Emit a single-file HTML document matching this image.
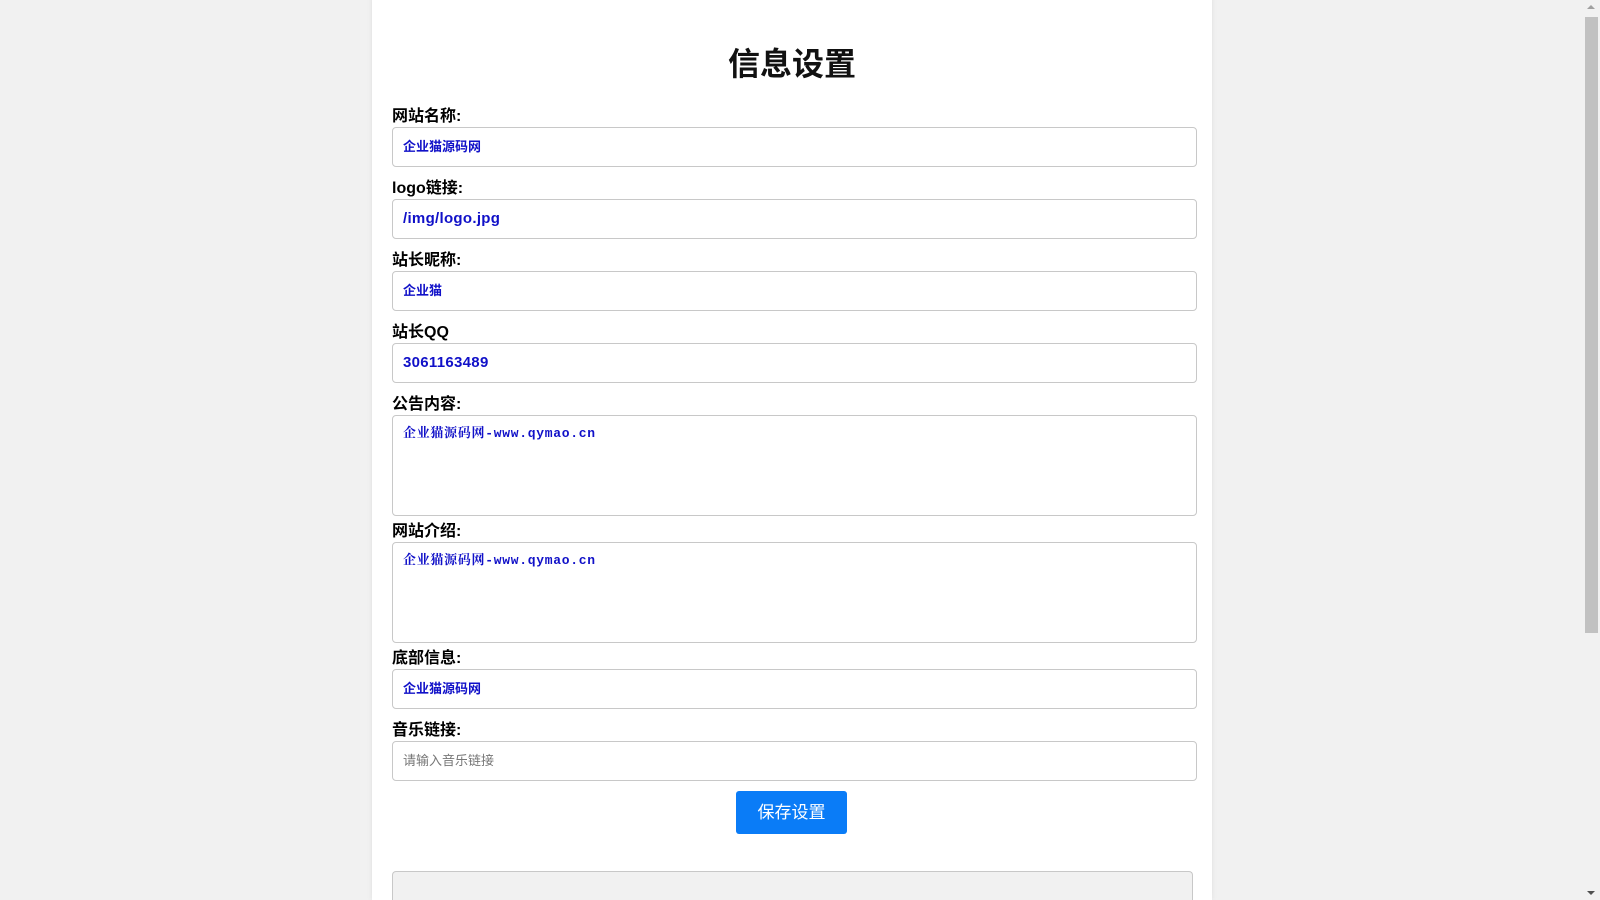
<!DOCTYPE html>
<html><head><meta charset="utf-8"><style>
html,body{margin:0;padding:0;width:1600px;height:900px;overflow:hidden;}
body{background:#f1f1f1;position:relative;font-family:"Liberation Sans","Noto Sans CJK SC",sans-serif;}
.card{position:absolute;left:372px;top:-10px;width:840px;height:910px;background:#fff;border-radius:8px 8px 0 0;box-shadow:0 0 6px rgba(0,0,0,0.08);}
h1{position:absolute;left:372px;width:840px;top:43px;margin:0;text-align:center;font-size:32px;font-weight:bold;color:#111;line-height:42px;}
.lab{position:absolute;left:392px;font-size:16px;color:#000;line-height:20px;font-weight:bold;}
.in{position:absolute;left:392px;width:805px;height:40px;border:1px solid #c8c8c8;border-radius:4px;background:#fff;box-sizing:border-box;padding-left:10px;font-size:13px;font-weight:bold;color:#1010c8;line-height:38px;}
.lt{font-size:15px;letter-spacing:0.3px;}
.ta{height:101px;line-height:20px;padding-top:8px;font-family:"Liberation Mono","Noto Serif CJK SC",monospace;font-size:13px;letter-spacing:0.7px;}
.ph{color:#777;font-weight:normal;}
.btn{position:absolute;left:736px;top:791px;width:111px;height:43px;background:#0a7cf7;border-radius:3px;color:#fff;font-size:17px;text-align:center;line-height:43px;}
.box{position:absolute;left:392px;top:871px;width:799px;height:29px;background:#f1f1f1;border:1px solid #c8c8c8;border-bottom:none;border-radius:4px 4px 0 0;}
.sb{position:absolute;right:0;top:0;width:17px;height:900px;background:#f1f1f1;}
.th{position:absolute;left:2px;top:17px;width:13px;height:616px;background:#c1c1c1;}
</style></head><body>
<div class="card"></div>
<h1>信息设置</h1>
<div class="lab" style="top:107px">网站名称:</div>
<div class="in" style="top:127px">企业猫源码网</div>
<div class="lab" style="top:179px">logo链接:</div>
<div class="in" style="top:199px"><span class="lt">/img/logo.jpg</span></div>
<div class="lab" style="top:251px">站长昵称:</div>
<div class="in" style="top:271px">企业猫</div>
<div class="lab" style="top:323px">站长QQ</div>
<div class="in" style="top:343px"><span class="lt">3061163489</span></div>
<div class="lab" style="top:395px">公告内容:</div>
<div class="in ta" style="top:415px">企业猫源码网-www.qymao.cn</div>
<div class="lab" style="top:522px">网站介绍:</div>
<div class="in ta" style="top:542px">企业猫源码网-www.qymao.cn</div>
<div class="lab" style="top:649px">底部信息:</div>
<div class="in" style="top:669px">企业猫源码网</div>
<div class="lab" style="top:721px">音乐链接:</div>
<div class="in ph" style="top:741px">请输入音乐链接</div>
<div class="btn">保存设置</div>
<div class="box"></div>
<div class="sb"><div class="th"></div>
<div style="position:absolute;left:4px;top:5px;border-left:4px solid transparent;border-right:4px solid transparent;border-bottom:4px solid #a0a0a0;"></div>
<div style="position:absolute;left:4px;bottom:5px;border-left:4px solid transparent;border-right:4px solid transparent;border-top:4px solid #505050;"></div>
</div>
</body></html>
